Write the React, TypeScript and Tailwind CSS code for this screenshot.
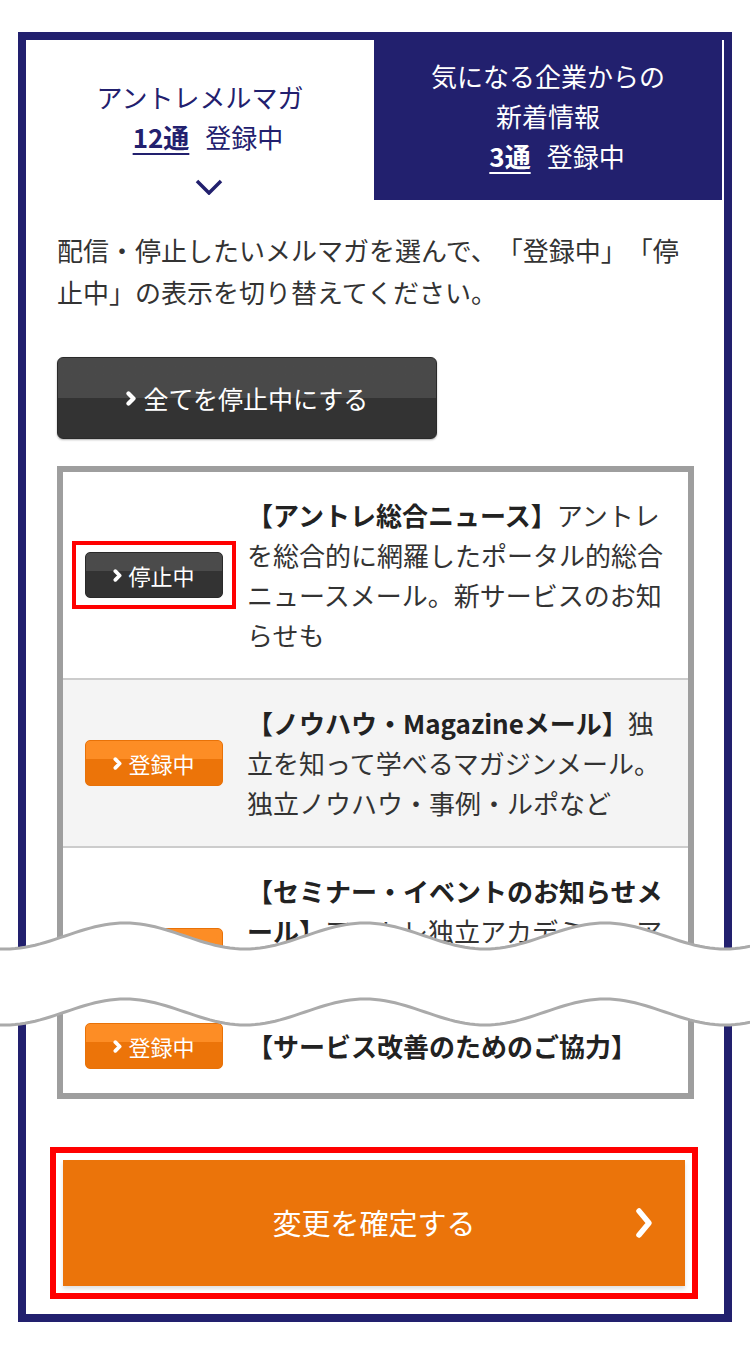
import React from 'react';

// wave break that hides the middle of the list
function WaveBreak() {
  const pts: [number, number][] = [];
  for (let x = -5; x <= 755; x += 5) {
    const y = 31 - 13 * Math.cos((2 * Math.PI * (x - 125)) / 240);
    pts.push([x, y]);
  }
  const top = pts.map(([x, y], i) => `${i ? 'L' : 'M'}${x},${y.toFixed(2)}`).join(' ');
  const bottom = pts.map(([x, y], i) => `${i ? 'L' : 'M'}${x},${(y + 76).toFixed(2)}`).join(' ');
  const fill =
    top +
    ' ' +
    [...pts].reverse().map(([x, y]) => `L${x},${(y + 76).toFixed(2)}`).join(' ') +
    ' Z';
  return (
    <svg className="absolute left-0 top-[905px]" width="750" height="135" viewBox="0 0 750 135">
      <path d={fill} fill="#fff" />
      <path d={top} fill="none" stroke="#aaaaaa" strokeWidth="3" />
      <path d={bottom} fill="none" stroke="#aaaaaa" strokeWidth="3" />
    </svg>
  );
}

function Chev({ className, w = 3.2 }: { className?: string; w?: number }) {
  return (
    <svg viewBox="0 0 8 12" className={className}>
      <polyline points="2,2 6,6 2,10" fill="none" stroke="currentColor" strokeWidth={w} strokeLinecap="round" strokeLinejoin="round" />
    </svg>
  );
}

function SmallButton({ label, dark }: { label: string; dark?: boolean }) {
  return (
    <div
      className={
        dark
          ? 'w-[138px] h-[46px] rounded-[5px] border border-[#2a2a2a] bg-linear-to-b from-[#4b4b4b] from-40% to-[#333333] to-40% flex items-center justify-center gap-[6px] text-white'
          : 'w-[138px] h-[46px] rounded-[5px] border border-[#e87208] bg-linear-to-b from-[#fd8d25] from-40% to-[#ec7409] to-40% flex items-center justify-center gap-[6px] text-white'
      }
    >
      <Chev className="w-[9px] h-[13px]" w={3.4} />
      <span className="text-[22px] leading-none">{label}</span>
    </div>
  );
}

function Row({ dark, highlight, bg, children }: { dark?: boolean; highlight?: boolean; bg?: string; children: React.ReactNode }) {
  return (
    <div className={`flex items-center gap-[24px] px-[22px] py-[23px] ${bg ?? ''}`}>
      <div className="relative shrink-0">
        <SmallButton label={dark ? '停止中' : '登録中'} dark={dark} />
        {highlight && <div className="absolute inset-x-[-13px] inset-y-[-11px] border-4 border-[#ff0000]" />}
      </div>
      <p className="w-[419px] text-[26px] leading-[40px] text-[#333]">{children}</p>
    </div>
  );
}

export default function App() {
  return (
    <div className="relative min-h-[1371px] bg-white pt-[32px] px-[18px] [text-spacing-trim:space-all] font-['Noto_Sans_CJK_JP','Noto_Sans',sans-serif]">
      <div className="border-8 border-[#22206e]">
        {/* tabs */}
        <div className="flex">
          <div className="w-[348px] h-[160px] flex flex-col items-center pt-[37px] text-[26px] leading-[40px] text-[#22206e]">
            <div>アントレメルマガ</div>
            <div className="pl-[16px]">
              <span className="font-bold underline decoration-2 underline-offset-[5px]">12通</span>
              <span className="ml-[16px]">登録中</span>
            </div>
            <svg className="mt-[22px] ml-[18px]" width="28" height="16" viewBox="0 0 28 16">
              <polyline points="2,2 14,14 26,2" fill="none" stroke="#22206e" strokeWidth="3.5" />
            </svg>
          </div>
          <div className="w-[348px] h-[160px] bg-[#22206e] flex flex-col items-center pt-[16px] text-[26px] leading-[40px] text-white">
            <div>気になる企業からの</div>
            <div>新着情報</div>
            <div className="pl-[18px]">
              <span className="font-bold underline decoration-2 underline-offset-[5px]">3通</span>
              <span className="ml-[16px]">登録中</span>
            </div>
          </div>
        </div>

        <div className="pl-[31px] pr-[30px] pb-[15px]">
          <p className="mt-[29px] text-[26px] leading-[42px] text-[#333]">
            配信・停止したいメルマガを選んで、「登録中」「停止中」の表示を切り替えてください。
          </p>

          <div className="mt-[44px] w-[380px] h-[82px] rounded-[6px] border border-[#2a2a2a] bg-linear-to-b from-[#494949] from-50% to-[#333333] to-50% flex items-center justify-center gap-[8px] text-white shadow-[0_1px_2px_rgba(0,0,0,0.3)]">
            <Chev className="w-[10px] h-[15px]" w={3.4} />
            <span className="text-[25px] leading-none">全てを停止中にする</span>
          </div>

          <div className="mt-[27px] border-[6px] border-[#9e9e9e] bg-white">
            <Row dark highlight>
              <b className="text-[#222]">【アントレ総合ニュース】</b>アントレを総合的に網羅したポータル的総合ニュースメール。新サービスのお知らせも
            </Row>
            <div className="border-t-2 border-[#cccccc]">
              <Row bg="bg-[#f4f4f4]">
                <b className="text-[#222]">【ノウハウ・Magazineメール】</b>独立を知って学べるマガジンメール。独立ノウハウ・事例・ルポなど
              </Row>
            </div>
            <div className="h-[153px] overflow-hidden border-t-2 border-[#cccccc]">
              <Row>
                <b className="text-[#222]">【セミナー・イベントのお知らせメール】</b>アントレ独立アカデミー・アントレセミナーなど各種イベントの開催情報をお届け
              </Row>
            </div>
            <div className="flex items-center gap-[24px] px-[22px] py-[24px]">
              <SmallButton label="登録中" />
              <p className="text-[26px] leading-[40px] font-bold text-[#222]">【サービス改善のためのご協力】</p>
            </div>
          </div>

          <div className="mt-[48px] ml-[-7px] mr-[-4px] border-[6px] border-[#ff0000] p-[7px]">
            <div className="relative h-[126px] bg-[#eb740a] flex items-center justify-center shadow-[0_3px_4px_rgba(0,0,0,0.12)]">
              <span className="text-[29px] text-white">変更を確定する</span>
              <svg className="absolute right-[32px] top-[47px]" width="18" height="32" viewBox="0 0 18 32">
                <polyline points="4,4 14,16 4,28" fill="none" stroke="#fff" strokeWidth="5.5" strokeLinejoin="round" strokeLinecap="round" />
              </svg>
            </div>
          </div>
        </div>
      </div>
      <WaveBreak />
    </div>
  );
}
